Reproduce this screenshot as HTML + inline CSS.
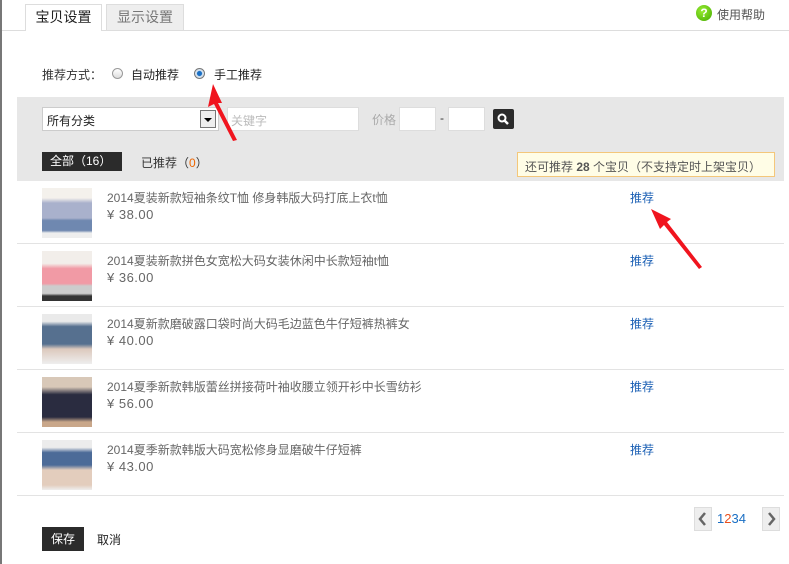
<!DOCTYPE html>
<html><head><meta charset="utf-8"><style>
*{margin:0;padding:0;box-sizing:border-box}
body{width:789px;height:564px;overflow:hidden;background:#fff;font-family:"Liberation Sans","Noto Sans CJK SC",sans-serif;font-size:12px;color:#333;position:relative}
.a{position:absolute;white-space:nowrap}
.row{position:absolute;left:17px;width:767px;height:63px;border-bottom:1px solid #e3e3e3}
.img{position:absolute;left:25px;top:7px;width:50px;height:50px}
.t{position:absolute;left:90px;top:8px;color:#666;font-size:12px}
.p{position:absolute;left:90px;top:26px;color:#666;font-size:13px;letter-spacing:0.5px}
.r{position:absolute;left:613px;top:8px;color:#1a5fb4}
.pg{position:absolute;top:507px;width:18px;height:24px;border:1px solid #ddd;background:#eee}
</style></head><body>
<div class="a" style="left:0;top:0;width:2px;height:564px;background:#777"></div>
<div class="a" style="left:2px;top:30px;width:787px;height:1px;background:#ddd"></div>
<div class="a" style="left:25px;top:4px;width:77px;height:27px;border:1px solid #ddd;border-bottom:none;background:#fff;font-size:14px;color:#222;text-align:center;line-height:25px">宝贝设置</div>
<div class="a" style="left:106px;top:4px;width:78px;height:26px;border:1px solid #ddd;border-bottom:none;background:#eee;font-size:14px;color:#777;text-align:center;line-height:25px">显示设置</div>
<div class="a" style="left:696px;top:5px;width:16px;height:16px;border-radius:50%;background:radial-gradient(circle at 40% 35%,#9e3,#4a0);color:#fff;font-weight:bold;font-size:12px;text-align:center;line-height:16px">?</div>
<div class="a" style="left:717px;top:6px;color:#555">使用帮助</div>

<div class="a" style="left:42px;top:66px;color:#333">推荐方式：</div>
<div class="a" style="left:112px;top:68px;width:11px;height:11px;border-radius:50%;border:1px solid #999;background:linear-gradient(#fff,#ddd)"></div>
<div class="a" style="left:131px;top:66px;color:#222">自动推荐</div>
<div class="a" style="left:194px;top:68px;width:11px;height:11px;border-radius:50%;border:1px solid #777;background:radial-gradient(circle,#1a6fc4 0 35%,#cde 45%,#eee)"></div>
<div class="a" style="left:214px;top:66px;color:#222">手工推荐</div>

<div class="a" style="left:17px;top:97px;width:767px;height:84px;background:#e7e7e7"></div>
<div class="a" style="left:42px;top:107px;width:177px;height:24px;background:#fff;border:1px solid #ccc;padding:4px 4px;color:#222">所有分类</div>
<div class="a" style="left:200px;top:110px;width:16px;height:18px;border:1px solid #777;background:#eee"><div style="margin:7px auto 0;width:0;height:0;border-left:4px solid transparent;border-right:4px solid transparent;border-top:4px solid #000"></div></div>
<div class="a" style="left:227px;top:107px;width:132px;height:24px;background:#fff;border:1px solid #ddd;padding:4px 3px;color:#bbb">关键字</div>
<div class="a" style="left:372px;top:111px;color:#aaa">价格</div>
<div class="a" style="left:399px;top:107px;width:37px;height:24px;background:#fff;border:1px solid #ddd"></div>
<div class="a" style="left:440px;top:111px;color:#333">-</div>
<div class="a" style="left:448px;top:107px;width:37px;height:24px;background:#fff;border:1px solid #ddd"></div>
<div class="a" style="left:493px;top:109px;width:21px;height:20px;background:#2b2b2b;border-radius:2px"><svg width="21" height="20"><circle cx="9" cy="9" r="3.5" fill="none" stroke="#fff" stroke-width="2"/><line x1="11.5" y1="11.5" x2="15" y2="15" stroke="#fff" stroke-width="2.5"/></svg></div>

<div class="a" style="left:42px;top:152px;width:80px;height:19px;background:#2b2b2b;color:#fff;padding-left:8px;line-height:19px">全部（16）</div>
<div class="a" style="left:141px;top:154px;color:#333">已推荐（<span style="color:#e60">0</span>）</div>
<div class="a" style="left:517px;top:152px;width:258px;height:25px;background:#fffde6;border:1px solid #f4c77a;padding:5px 7px;color:#555">还可推荐 <b>28</b> 个宝贝（不支持定时上架宝贝）</div>

<div class="row" style="top:181px"><div class="img" style="background:linear-gradient(#f4f1ec 0 20%,#a9b1cc 30% 60%,#6f88b0 65% 85%,#eee 90%)"></div><div class="t">2014夏装新款短袖条纹T恤 修身韩版大码打底上衣t恤</div><div class="p">¥ 38.00</div><div class="r">推荐</div></div>
<div class="row" style="top:244px"><div class="img" style="background:linear-gradient(#f2eeea 0 25%,#f19aa5 35% 65%,#ccc 70% 85%,#333 90%)"></div><div class="t">2014夏装新款拼色女宽松大码女装休闲中长款短袖t恤</div><div class="p">¥ 36.00</div><div class="r">推荐</div></div>
<div class="row" style="top:307px"><div class="img" style="background:linear-gradient(#eaeaea 0 15%,#56708f 25% 60%,#dcc9bd 70%,#eee)"></div><div class="t">2014夏新款磨破露口袋时尚大码毛边蓝色牛仔短裤热裤女</div><div class="p">¥ 40.00</div><div class="r">推荐</div></div>
<div class="row" style="top:370px"><div class="img" style="background:linear-gradient(#d8c8b8 0 20%,#2a2c40 35% 80%,#c9a78a 90%)"></div><div class="t">2014夏季新款韩版蕾丝拼接荷叶袖收腰立领开衫中长雪纺衫</div><div class="p">¥ 56.00</div><div class="r">推荐</div></div>
<div class="row" style="top:433px"><div class="img" style="background:linear-gradient(#ececec 0 15%,#4c6b98 25% 50%,#e3cdbd 60% 90%,#eee)"></div><div class="t">2014夏季新款韩版大码宽松修身显磨破牛仔短裤</div><div class="p">¥ 43.00</div><div class="r">推荐</div></div>

<div class="pg" style="left:694px"><svg width="16" height="22"><polyline points="10,5 5,11 10,17" fill="none" stroke="#666" stroke-width="2.5"/></svg></div>
<div class="a" style="left:717px;top:511px;font-size:13px;color:#1a6fc4">1<span style="color:#e94e1b">2</span>34</div>
<div class="pg" style="left:762px"><svg width="16" height="22"><polyline points="6,5 11,11 6,17" fill="none" stroke="#666" stroke-width="2.5"/></svg></div>

<div class="a" style="left:42px;top:527px;width:42px;height:24px;background:#2b2b2b;color:#fff;text-align:center;line-height:24px">保存</div>
<div class="a" style="left:97px;top:531px;color:#222">取消</div>

<svg class="a" style="left:0;top:0" width="789" height="564">
<polygon points="213,84 222,103 218,103 237,140 233,141 214,104 208,107" fill="#f0141e"/>
<polygon points="651,209 671,219 667,222 702,267 699,269 664,225 660,229" fill="#f0141e"/>
</svg>
</body></html>
